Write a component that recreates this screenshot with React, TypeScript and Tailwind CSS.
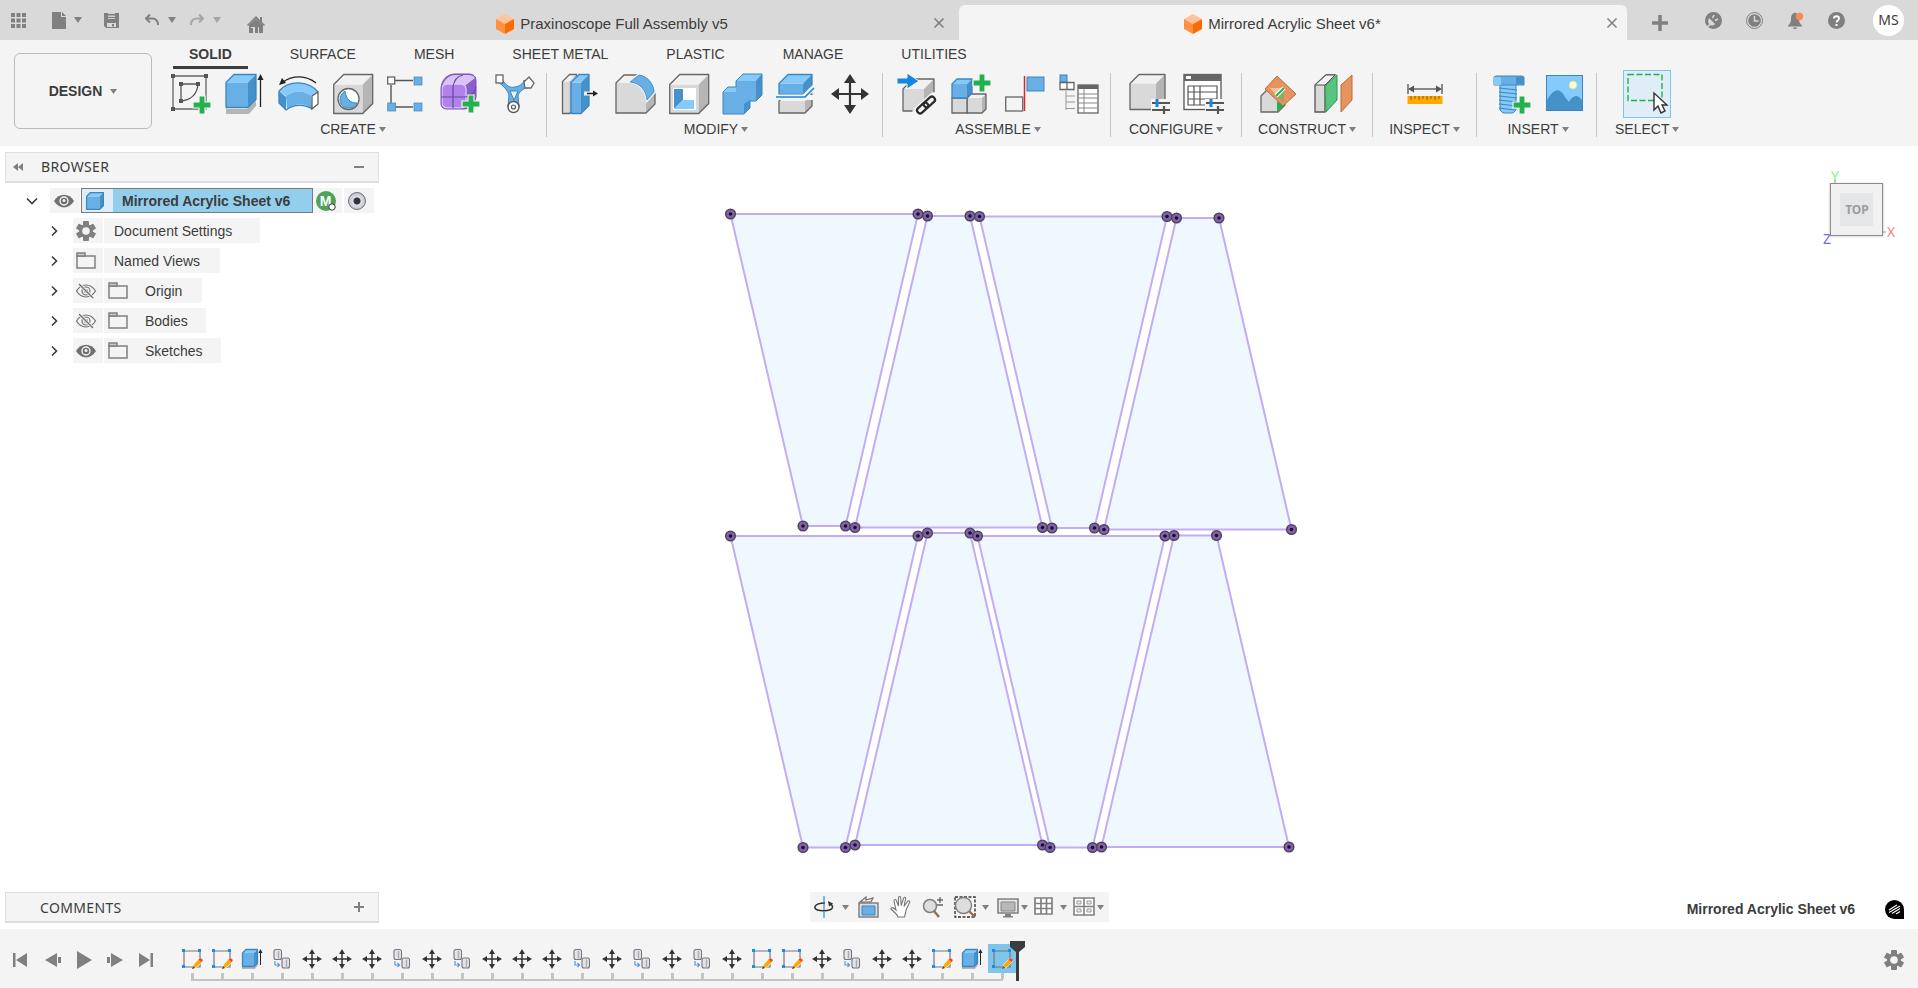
import React from "react";
import { X } from "lucide-react";

const BLUE = { front: "#67afe5", top: "#86c9fb", side: "#4592cb", line: "#3c86bd" };
const GRAY = { front: "#d9d9d9", top: "#f1f1f1", side: "#b5b5b5", line: "#666666" };

type BoxProps = { x: number; y: number; w: number; h: number; d: number; c?: typeof BLUE };

const Box = ({ x, y, w, h, d, c = GRAY }: BoxProps) => (
  <g strokeLinejoin="round">
    <path d={`M${x} ${y + d}h${w - d}v${h - d}h${d - w}z`} fill={c.front} />
    <path d={`M${x} ${y + d}l${d} ${-d}h${w - d}l${-d} ${d}z`} fill={c.top} />
    <path d={`M${x + w - d} ${y + d}l${d} ${-d}v${h - d}l${-d} ${d}z`} fill={c.side} />
    <path
      d={`M${x} ${y + d}l${d} ${-d}h${w - d}v${h - d}l${-d} ${d}h${d - w}z`}
      fill="none"
      stroke={c.line}
      strokeWidth="1.3"
    />
  </g>
);

const Plus = ({ x, y }: { x: number; y: number }) => (
  <path
    d={`M${x - 3} ${y - 9}h6v6h6v6h-6v6h-6v-6h-6v-6h6z`}
    fill="#22b14c"
    stroke="#f4f4f4"
    strokeWidth="1.2"
  />
);

const Tool = ({ children }: { children: React.ReactNode }) => (
  <svg viewBox="0 0 40 40" className="size-10 overflow-visible" aria-hidden="true">
    {children}
  </svg>
);

const SketchTool = () => (
  <Tool>
    <path d="M2 2h33v33H2z" fill="none" stroke="#666" strokeWidth="1.3" />
    <path d="M27 10H10v17C20 26 26 21 27 10z" fill="none" stroke="#555" strokeWidth="1.3" />
    {[[2, 2], [35, 2], [2, 35], [10, 10], [27, 10], [10, 27]].map(([x, y]) => (
      <rect key={`${x}-${y}`} x={x - 2} y={y - 2} width="4" height="4" fill="#555" />
    ))}
    <Plus x={31} y={31} />
  </Tool>
);

const ExtrudeTool = () => (
  <Tool>
    <path d="M1 35h21l9-8v5l-7 8H1z" fill="#b5b5b5" />
    <Box x={1} y={0.5} w={30} h={33} d={8} c={BLUE} />
    <path d="M35.5 4v29" stroke="#222" strokeWidth="1.3" />
    <path d="M35.5 0l3 6h-6z" fill="#222" />
  </Tool>
);

const RevolveTool = () => (
  <Tool>
    <path d="M0 17l7 5c8-6 18-6 25 0l7-4C29 6 10 6 0 17z" fill={BLUE.top} />
    <path d="M0 17l7 6v13l-7-7z" fill={BLUE.side} />
    <path d="M7 22c8-6 18-6 25 0l1 13c-7-6-18-6-25 1z" fill={BLUE.front} />
    <path d="M0 17C10 6 29 6 39 18M0 17v12l7 7c8-6 19-6 26-1" fill="none" stroke={BLUE.line} strokeWidth="1.3" />
    <path d="M33 22l6-4v12l-6 5z" fill="#fff" stroke="#555" strokeWidth="1.2" />
    <path d="M4 8C14 1 27 1 37 9" fill="none" stroke="#222" strokeWidth="1.4" />
    <path d="M0 11l3-7 4 5z" fill="#222" />
  </Tool>
);

const HoleTool = () => (
  <Tool>
    <Box x={0.7} y={0.5} w={39} h={39} d={10} />
    <circle cx="15.5" cy="25" r="10.5" fill="#fff" stroke="#666" strokeWidth="1.3" />
    <path d="M12 17c1 8 5 12 12 12-2 4-5 5-9 5-5 0-8-4-8-8 0-4 2-7 5-9z" fill={BLUE.front} stroke={BLUE.line} />
  </Tool>
);

const PatternTool = () => (
  <Tool>
    <path d="M8 6.5h18M4 11v18M8 33h18" fill="none" stroke="#555" strokeWidth="1.4" />
    <rect x="0.7" y="3" width="7" height="7" fill="#fff" stroke="#666" strokeWidth="1.3" />
    {[[27, 3], [0.7, 29], [27, 29]].map(([x, y]) => (
      <rect key={`${x}-${y}`} x={x} y={y} width="8" height="8" fill={BLUE.front} stroke={BLUE.line} strokeWidth="0.7" />
    ))}
  </Tool>
);

const FormTool = () => (
  <Tool>
    <path d="M0 14C1 6 5 1 13 0h15c5 0 7 3 7 7v16c-1 6-5 11-11 12H6c-4 0-6-2-6-6z" fill="#8a5fcb" />
    <path d="M1 12c3-7 7-11 13-11h13c4 0 6 1 7 3l-9 7H7z" fill="#d9c2f8" />
    <rect x="1" y="10" width="24" height="24" rx="5" fill="#b083ea" stroke="#dfc9fb" strokeWidth="1.3" />
    <path d="M12 34V13C13 6 17 2 22 1M0 23h24c6-1 10-5 11-10" fill="none" stroke="#6b45a3" strokeWidth="1.2" />
    <path d="M0 14C1 6 5 1 13 0h15c5 0 7 3 7 7v16c-1 6-5 11-11 12H6c-4 0-6-2-6-6z" fill="none" stroke="#7950b3" />
    <Plus x={30} y={30} />
  </Tool>
);

const DeriveTool = () => (
  <Tool>
    <path
      d="M6 4c6 9 9 10 14 9s8-3 9-7l6 5c-6 4-11 6-12 11l1 10c-2 6-9 6-11 0l1-11C13 17 8 11 3 8z"
      fill={BLUE.front}
      stroke={BLUE.line}
    />
    <path d="M15 17h8l-4 9z" fill="#f4f4f4" stroke={BLUE.line} />
    <rect x="1" y="1" width="7" height="8" fill="#fff" stroke="#666" strokeWidth="1.3" />
    <path d="M29 8l5-5 5 6-3 5h-6z" fill="#fff" stroke="#666" strokeWidth="1.3" />
    <circle cx="18.5" cy="33" r="5.5" fill="#fff" stroke="#555" strokeWidth="1.4" />
    <circle cx="18.5" cy="33" r="2" fill="#fff" stroke="#555" strokeWidth="1.2" />
  </Tool>
);

const PressPullTool = () => (
  <Tool>
    <Box x={1.5} y={0.5} w={14} h={39} d={7} />
    <path d="M10 7l8-7h11v30l-9 10H10z" fill="#f4f4f4" />
    <Box x={10} y={0.5} w={18} h={39} d={8} c={BLUE} />
    <path d="M23 19.5h15" stroke="#f4f4f4" strokeWidth="4" />
    <path d="M26 19.5h8" stroke="#222" strokeWidth="1.5" />
    <path d="M37 19.5l-5-3v6z" fill="#222" />
  </Tool>
);

const FilletTool = () => (
  <Tool>
    <path d="M1 9l8-8h15C34 4 40 12 40 20v10l-9 9H1z" fill="#f1f1f1" />
    <path d="M1 9h13c9 0 17 8 17 18v12H1z" fill={GRAY.front} />
    <path d="M31 27l9-8v11l-9 9z" fill={GRAY.side} />
    <path d="M1 9l8-8h15C34 4 40 12 40 20v10l-9 9H1z" fill="none" stroke="#666" strokeWidth="1.3" />
    <path d="M14 8l10-8c9 1 16 9 16 18l-8 9C31 17 25 9 14 8z" fill={BLUE.front} stroke="#f4f4f4" strokeWidth="2" />
    <path d="M15 8l9-7c8 1 15 9 15 17l-7 8C31 16 25 9 15 8z" fill={BLUE.front} stroke={BLUE.line} strokeWidth="0.8" />
  </Tool>
);

const ShellTool = () => (
  <Tool>
    <Box x={0.7} y={0.5} w={39} h={39} d={10} />
    <path d="M4 14h23v22H4z" fill="#fff" />
    <path d="M5 15h9v11l-9 9z" fill={BLUE.side} />
    <path d="M14 26h11v9H5z" fill={BLUE.top} />
  </Tool>
);

const CombineTool = () => (
  <Tool>
    <path d="M0 18l5-5h8V7l7-7h19v21l-6 6h-6v7l-6 6H0z" fill={BLUE.front} />
    <path d="M0 18l5-5h8v5zM13 7l7-7h19l-6 7z" fill={BLUE.top} />
    <path d="M33 7l6-7v21l-6 6zM21 30l6-4v8l-6 6z" fill={BLUE.side} />
    <path d="M0 18l5-5h8V7l7-7h19v21l-6 6h-6v7l-6 6H0z" fill="none" stroke={BLUE.line} />
  </Tool>
);

const SplitTool = () => (
  <Tool>
    <Box x={2} y={20} w={33} h={19} d={7} />
    <path d="M0 21h38v5H0z" fill="#f4f4f4" />
    <Box x={2} y={0.5} w={33} h={20} d={9} c={BLUE} />
    <path d="M0 23h27l10-10" fill="none" stroke="#f4f4f4" strokeWidth="5" />
    <path d="M-1 23h29l9-9" fill="none" stroke="#1687e0" strokeWidth="1.6" />
  </Tool>
);

const MoveTool = () => (
  <Tool>
    <path d="M19 4v32M4 20h31" stroke="#333" strokeWidth="2.2" />
    <path d="M19 0l6 9H13zM19 40l6-9H13zM0 20l8-6v12zM38 20l-8-6v12z" fill="#333" />
  </Tool>
);

const InsertDeriveTool = () => (
  <Tool>
    <Box x={6} y={5} w={31} h={32} d={10} />
    <path d="M0 4h10v-5l12 8-12 8v-5H0z" fill="#1687e0" stroke="#f4f4f4" />
    <g fill="none" transform="rotate(-42 29 31)">
      <path d="M18 31h22" stroke="#f4f4f4" strokeWidth="11" strokeLinecap="round" />
      <rect x="18" y="28" width="13" height="6" rx="3" stroke="#2a2a2a" strokeWidth="2.2" />
      <rect x="27" y="28" width="13" height="6" rx="3" stroke="#2a2a2a" strokeWidth="2.2" />
    </g>
  </Tool>
);

const NewComponentTool = () => (
  <Tool>
    <Box x={16} y={20} w={19} h={19} d={4} />
    <path d="M1 24h15v15H1z" fill={GRAY.front} stroke="#666" strokeWidth="1.3" />
    <Box x={1} y={5} w={20} h={19} d={5} c={BLUE} />
    <Plus x={31} y={9} />
  </Tool>
);

const JointTool = () => (
  <Tool>
    <rect x="0.7" y="23" width="17" height="14" fill="#f4f4f4" stroke="#666" strokeWidth="1.3" />
    <rect x="22" y="3" width="17" height="14" fill={BLUE.front} stroke={BLUE.line} />
    <path d="M19.5 2v35" stroke="#d02a2a" strokeWidth="1.5" />
  </Tool>
);

const BomTool = () => (
  <Tool>
    <rect x="1" y="1" width="7" height="7" fill={BLUE.front} stroke={BLUE.line} />
    <path d="M1 8.5h14v7H1zM8 8.5v7" fill="#fff" stroke="#666" strokeWidth="1.3" />
    <path d="M7 17v19M7 22h9M7 28h9M7 34.5h9" fill="none" stroke="#999" />
    <rect x="19" y="11" width="20" height="28" fill="#fff" stroke="#666" strokeWidth="1.3" />
    <path d="M19 11h20v4H19z" fill="#666" />
    <path d="M19 20h20M19 24h20M19 29h20M19 34h20M25 15v24" stroke="#888" />
  </Tool>
);

const Sliders = ({ x, y }: { x: number; y: number }) => (
  <g>
    <path d={`M${x - 1} ${y - 4}h19v14h-19z`} fill="#f4f4f4" />
    <path d={`M${x} ${y}h18M${x} ${y + 7}h18M${x + 12} ${y + 3}v8`} stroke="#555" strokeWidth="2.2" />
    <path d={`M${x + 5} ${y - 4}v8`} stroke="#1687e0" strokeWidth="3" />
  </g>
);

const ConfigureTool = () => (
  <Tool>
    <Box x={1} y={0.5} w={35} h={35} d={9} />
    <Sliders x={23} y={29} />
  </Tool>
);

const ConfigTableTool = () => (
  <Tool>
    <rect x="1" y="0.5" width="37" height="35" fill="#fff" stroke="#555" strokeWidth="1.3" />
    <path d="M1 0h37v7H1z" fill="#666" />
    <path d="M3 2h5v3H3z" fill="#fff" />
    <path d="M5 12h29v19H5zM5 18h29M5 25h29M11 12v19M17 12v19" fill="none" stroke="#555" strokeWidth="1.2" />
    <Sliders x={23} y={29} />
  </Tool>
);

const PlaneAngleTool = () => (
  <Tool>
    <path d="M1 22l7-7h10l7 6v10l-7 7H1z" fill={GRAY.front} stroke="#666" strokeWidth="1.3" />
    <path d="M17 27l7 5-7 6z" fill="#22b14c" />
    <path d="M17 2l19 18-13 12L5 15z" fill="#e5935f" stroke="#b86c3c" />
    <path d="M10 14h14l-6 9z" fill="#f0c4a6" />
    <path d="M24 15v14l-8-7z" fill="#97a565" />
    <path d="M16 22l8-8" stroke="#fff" strokeWidth="4" />
    <path d="M16 22l8-8" stroke="#22b14c" strokeWidth="2" />
  </Tool>
);

const PlaneOffsetTool = () => (
  <Tool>
    <path d="M1 11L12 1h9L11 11v27H1z" fill={GRAY.front} stroke="#555" strokeWidth="1.3" />
    <path d="M1 11L12 1h9L11 11z" fill="#f1f1f1" stroke="#555" />
    <path d="M11 12L23 1v25L12 38z" fill="#59c47d" stroke="#2c9a52" />
    <path d="M27 11L38 1v25L27 38z" fill="#e5935f" stroke="#b86c3c" />
  </Tool>
);

const MeasureTool = () => (
  <Tool>
    <path d="M3 10v10M37 10v10M6 15h28" stroke="#666" strokeWidth="1.5" />
    <path d="M3 15l6-3.5v7zM37 15l-6-3.5v7z" fill="#555" />
    <rect x="2.5" y="22" width="35" height="8" fill="#ffa800" />
    <path d="M6 22v4M10 22v3M14 22v4M18 22v3M22 22v4M26 22v3M30 22v4M34 22v3" stroke="#8a5a00" />
  </Tool>
);

const FastenerTool = () => (
  <Tool>
    <path d="M9 10h16v26l-3 3H12l-3-3z" fill={BLUE.top} stroke={BLUE.line} />
    <path d="M8 14l18 2M8 18l18 2M8 22l18 2M8 26l18 2M8 30l18 2M8 34l16 2" stroke={BLUE.line} strokeWidth="1.2" />
    <path d="M3 3l2-1h26l2 1v8H3z" fill={BLUE.front} stroke={BLUE.line} />
    <path d="M3 3h7v8H3z" fill={BLUE.top} />
    <path d="M25 3h8v7h-8z" fill={BLUE.side} />
    <Plus x={31} y={31} />
  </Tool>
);

const CanvasTool = () => (
  <Tool>
    <rect x="1.5" y="1.5" width="36" height="35" fill={BLUE.top} />
    <path d="M2 26c7-12 13-13 18-3l4 5c4-7 8-8 13-2v10H2z" fill={BLUE.side} />
    <circle cx="28" cy="11" r="4" fill="#fffbc8" stroke="#c9d7a8" strokeWidth="0.7" />
    <rect x="1.5" y="1.5" width="36" height="35" fill="none" stroke={BLUE.line} />
  </Tool>
);

const SelectTool = () => (
  <Tool>
    <rect x="1" y="0.5" width="34" height="26" fill="none" stroke="#22b14c" strokeWidth="1.4" strokeDasharray="6 2.5" />
    <path d="M27 19v17l4-4 3 7 4-2-3-6h5z" fill="#fff" stroke="#333" strokeWidth="1.4" />
  </Tool>
);

const groups = [
  {
    label: "CREATE",
    box: "pl-2.5 pr-[7px]",
    tools: [SketchTool, ExtrudeTool, RevolveTool, HoleTool, PatternTool, FormTool, DeriveTool],
  },
  {
    label: "MODIFY",
    box: "pl-2.5 pr-[7px]",
    tools: [PressPullTool, FilletTool, ShellTool, CombineTool, SplitTool, MoveTool],
  },
  { label: "ASSEMBLE", box: "pl-2.5 pr-[7px]", tools: [InsertDeriveTool, NewComponentTool, JointTool, BomTool] },
  { label: "CONFIGURE", box: "px-3.5", tools: [ConfigureTool, ConfigTableTool] },
  { label: "CONSTRUCT", box: "px-3.5", tools: [PlaneAngleTool, PlaneOffsetTool] },
  { label: "INSPECT", box: "w-[103px]", tools: [MeasureTool] },
  { label: "INSERT", box: "pl-2.5 pr-[7px]", tools: [FastenerTool, CanvasTool] },
  { label: "SELECT", box: "pl-[18px]", tools: [SelectTool] },
];

const workspaceTabs = ["SOLID", "SURFACE", "MESH", "SHEET METAL", "PLASTIC", "MANAGE", "UTILITIES"];

const Caret = ({ className = "h-[5px] w-[7px] text-[#808080]" }: { className?: string }) => (
  <svg viewBox="0 0 8 6" preserveAspectRatio="none" className={`shrink-0 ${className}`} aria-hidden="true">
    <path d="M0 0h8L4 6z" fill="currentColor" />
  </svg>
);

const OrangeCube = () => (
  <svg viewBox="0 0 18 20" className="h-5 w-[18px] shrink-0" aria-hidden="true">
    <path d="M9 0l9 5-9 5-9-5z" fill="#ffc39b" />
    <path d="M0 5l9 5v10l-9-5z" fill="#ff9142" />
    <path d="M18 5l-9 5v10l9-5z" fill="#ff6a00" />
  </svg>
);

const TitleBar = () => (
  <header className="flex h-10 bg-[#d9d9d9]">
    <div className="flex w-[291px] shrink-0 items-center pl-[11px] text-[#808080]">
      <button aria-label="Data panel" className="mr-[26px]">
        <svg viewBox="0 0 15 15" className="size-[15px]" fill="currentColor">
          {[0, 5.5, 11].map((y) =>
            [0, 5.5, 11].map((x) => <rect key={`${x}-${y}`} x={x} y={y} width="4" height="4" />)
          )}
        </svg>
      </button>
      <button aria-label="File" className="mr-[22px] flex items-center gap-2">
        <svg viewBox="0 0 14 17" className="h-[17px] w-3.5" fill="currentColor">
          <path d="M0 0h9v5h5v12H0z" />
          <path d="M10 0l4 4h-4z" />
        </svg>
        <Caret className="h-1.5 w-2" />
      </button>
      <button aria-label="Save" className="mr-[26px]">
        <svg viewBox="0 0 15 15" className="size-[15px]">
          <path d="M0 0h15v15H2l-2-2z" fill="currentColor" />
          <path d="M4 0h7v6H4z" fill="#cfcfcf" />
          <path d="M4 1h7v1.5H4zM4 4h7v1H4z" fill="currentColor" />
          <path d="M3 10h9v4H3z" fill="#d9d9d9" />
          <path d="M8 11h2v2.500H8z" fill="currentColor" />
        </svg>
      </button>
      <button aria-label="Undo" className="mr-3.5 flex items-center gap-[9px]">
        <svg viewBox="0 0 14 12" className="h-3 w-3.5" fill="none" stroke="currentColor" strokeWidth="2">
          <path d="M5 0.5L1 4.5l4 4M1 4.5h6c4 0 6 2 6 6.5" />
        </svg>
        <Caret className="h-1.5 w-2" />
      </button>
      <button aria-label="Redo" className="mr-[26px] flex items-center gap-[9px] text-[#a6a6a6]">
        <svg viewBox="0 0 14 12" className="h-3 w-3.5" fill="none" stroke="currentColor" strokeWidth="2">
          <path d="M9 0.5l4 4-4 4M13 4.5H7c-4 0-6 2-6 6.5" />
        </svg>
        <Caret className="h-1.5 w-2" />
      </button>
      <button aria-label="Home" className="pt-2">
        <svg viewBox="0 0 18 17" className="h-[17px] w-[18px]">
          <path d="M9 0l4 4V1h2v5l3 3-1 1-8-7-8 7-1-1z" fill="currentColor" />
          <path d="M9 3l7 6v8H2V9z" fill="currentColor" />
          <path d="M4 11h3v6H6v-5H4zM7 11h1v6H7zM11 11h1v6h-1z" fill="#d9d9d9" />
        </svg>
      </button>
    </div>

    <div className="grid flex-1 grid-cols-2">
      <div className="flex items-center pr-3.5 text-[#808080]">
        <a href="#praxinoscope" className="flex flex-1 items-center justify-center gap-1.5 pt-2 text-[15px] text-[#3c3c3c]">
          <OrangeCube />
          Praxinoscope Full Assembly v5
        </a>
        <button aria-label="Close Praxinoscope Full Assembly v5" className="pt-1.5">
          <X size={16} strokeWidth={2.5} className="-mx-0.5" />
        </button>
      </div>
      <div className="mt-[5px] flex items-center rounded-t-md bg-[#f4f4f4] pr-[9px] text-[#808080]">
        <a href="#mirrored" className="flex flex-1 items-center justify-center gap-1.5 pt-[3px] text-[15px] text-[#3c3c3c]">
          <OrangeCube />
          Mirrored Acrylic Sheet v6*
        </a>
        <button aria-label="Close Mirrored Acrylic Sheet v6">
          <X size={16} strokeWidth={2.5} className="-mx-0.5" />
        </button>
      </div>
    </div>

    <div className="flex w-[291px] shrink-0 items-center justify-between pr-3.5 pl-[25px] text-[#808080]">
      <button aria-label="New tab" className="pt-1.5">
        <svg viewBox="0 0 16 16" className="size-4" fill="none" stroke="currentColor" strokeWidth="3.5">
          <path d="M8 0v16M0 8h16" />
        </svg>
      </button>
      <div className="flex items-center gap-6">
        <button aria-label="Extensions">
          <svg viewBox="0 0 17 17" className="size-[17px]">
            <circle cx="8.5" cy="8.5" r="8.5" fill="currentColor" />
            <path d="M2 15l5-4M9 3L7.5 6M13 7l-3 1.5" stroke="#d9d9d9" strokeWidth="1.6" />
            <path d="M4 6l6 6c-2 2-4 2-5.5 0.5S2.500 8 4 6z" fill="#d9d9d9" />
          </svg>
        </button>
        <button aria-label="Job status">
          <svg viewBox="0 0 17 17" className="size-[17px]">
            <circle cx="8.5" cy="8.5" r="8" fill="none" stroke="currentColor" />
            <circle cx="8.5" cy="8.5" r="6.300" fill="currentColor" />
            <path d="M8.5 4v5h4" fill="none" stroke="#d9d9d9" strokeWidth="1.5" />
          </svg>
        </button>
        <button aria-label="Notifications">
          <svg viewBox="0 0 17 17" className="size-[17px]">
            <path d="M8 0.5c3 1 4 3 4 6 0 4 1 5 3 7v1H1v-1c2-2 3-3 3-7 0-3 1-5 4-6zM6 15.5h4c0 2-4 2-4 0z" fill="currentColor" />
            <circle cx="12.5" cy="4.5" r="3.7" fill="#ff8a50" />
          </svg>
        </button>
        <button aria-label="Help">
          <svg viewBox="0 0 17 17" className="size-[17px]">
            <circle cx="8.5" cy="8.5" r="8.5" fill="currentColor" />
            <path d="M6 6.5C6 3.500 11 3.500 11 6.500c0 2-2.500 2-2.500 4" fill="none" stroke="#fff" strokeWidth="1.8" />
            <path d="M7.5 12h2v2h-2z" fill="#fff" />
          </svg>
        </button>
        <button
          aria-label="Account"
          className="ml-1 size-[31px] rounded-full bg-white font-['Noto_Sans',sans-serif] text-sm text-[#3c3c3c]"
        >
          MS
        </button>
      </div>
    </div>
  </header>
);

const Ribbon = () => (
  <div className="flex bg-[#f4f4f4] pb-[9px]">
    <button className="mt-[13px] ml-3.5 flex h-[76px] w-[138px] shrink-0 items-center justify-center gap-2 rounded-md border border-[#bbbbbb] text-sm font-bold">
      DESIGN
      <Caret />
    </button>

    <div className="ml-[5px]">
      <div role="tablist" className="flex h-[30px] gap-[26px] pl-4">
        {workspaceTabs.map((tab, i) => (
          <button
            key={tab}
            role="tab"
            aria-selected={i === 0}
            className={`mb-px h-[29px] border-b-3 px-4 pt-0.5 whitespace-nowrap ${
              i === 0 ? "border-[#3c3c3c] font-bold" : "border-transparent"
            }`}
          >
            {tab}
          </button>
        ))}
      </div>

      <div className="flex items-end">
        {groups.map((group, i) => (
          <React.Fragment key={group.label}>
            {i > 0 && <div className="h-16 w-px shrink-0 bg-[#c6c6c6]" />}
            <div className={`flex shrink-0 flex-col items-center gap-[3px] ${group.box}`}>
              <div className="flex gap-1.5">
                {group.tools.map((Icon, n) => (
                  <button
                    key={n}
                    aria-label={`${group.label} ${n + 1}`}
                    className={`size-12 border p-[3px] ${
                      group.label === "SELECT" ? "border-[#7cc4e8] bg-[#deedf6]" : "border-transparent"
                    }`}
                  >
                    <Icon />
                  </button>
                ))}
              </div>
              <button className="flex h-4 items-center gap-[3px] leading-4">
                {group.label}
                <Caret />
              </button>
            </div>
          </React.Fragment>
        ))}
      </div>
    </div>
  </div>
);

const Eye = ({ hidden = false }: { hidden?: boolean }) => (
  <svg viewBox="0 0 20 16" className="h-4 w-5" aria-hidden="true">
    {hidden ? (
      <g fill="none" stroke="#707070" strokeWidth="1.2">
        <path d="M0.5 8c5-8 14-8 19 0-5 8-14 8-19 0z" />
        <circle cx="10" cy="8" r="4" />
        <circle cx="10" cy="8" r="1.5" />
        <path d="M3 1l14 14" stroke="#f4f4f4" strokeWidth="3" />
        <path d="M3 1l14 14" strokeWidth="1.4" />
      </g>
    ) : (
      <>
        <path d="M0 8c5-8.500 15-8.500 20 0-5 8.500-15 8.500-20 0z" fill="#707070" />
        <circle cx="10" cy="8" r="4" fill="none" stroke="#f4f4f4" strokeWidth="1.4" />
        <circle cx="10" cy="7.5" r="1.5" fill="#f4f4f4" />
      </>
    )}
  </svg>
);

const Folder = () => (
  <svg viewBox="0 0 20 17" className="h-[17px] w-5" fill="none" stroke="#808080" strokeWidth="1.5" aria-hidden="true">
    <path d="M1 4h18v12H1z" />
    <path d="M1 1h8v3H1z" fill="#c9c9c9" />
  </svg>
);

const Gear = () => (
  <svg viewBox="0 0 20 20" className="size-5" aria-hidden="true">
    <g fill="#808080">
      <circle cx="10" cy="10" r="7" />
      {[0, 60, 120].map((a) => (
        <rect key={a} x="7" y="0" width="6" height="20" rx="1" transform={`rotate(${a} 10 10)`} />
      ))}
    </g>
    <circle cx="10" cy="10" r="3.8" fill="#f4f4f4" />
  </svg>
);

const Chevron = ({ open = false }: { open?: boolean }) => (
  <svg viewBox="0 0 12 12" className="size-3" fill="none" stroke="#3c3c3c" strokeWidth="1.6" aria-hidden="true">
    {open ? <path d="M1 3.500l5 5 5-5" /> : <path d="M4 1.500L8.500 6 4 10.500" />}
  </svg>
);

const nodes = [
  { label: "Document Settings", icon: "gear", pad: "pl-2.5 pr-7" },
  { label: "Named Views", icon: "folder", pad: "pl-2.5 pr-5" },
  { label: "Origin", icon: "folder", eye: "off", pad: "pl-1 pr-5" },
  { label: "Bodies", icon: "folder", eye: "off", pad: "pl-1 pr-[18px]" },
  { label: "Sketches", icon: "folder", eye: "on", pad: "pl-1 pr-[18px]" },
];

const Browser = () => (
  <section className="relative ml-[5px] w-[374px]">
    <div className="flex h-[31px] items-center border border-b-2 border-[#dedede] bg-[#f4f4f4] pr-3.5 pl-[7px] font-['Noto_Sans',sans-serif]">
      <button aria-label="Collapse browser">
        <svg viewBox="0 0 10 8" className="h-2 w-2.5" fill="#808080">
          <path d="M5 0v8L0 4zM10 0v8L5 4z" />
        </svg>
      </button>
      <h2 className="flex-1 pl-[18px] tracking-wide">BROWSER</h2>
      <button aria-label="Minimize" className="h-0.5 w-2.5 bg-[#808080]" />
    </div>

    <div className="mt-[5px] flex h-[25px] items-center">
      <button aria-label="Collapse document" className="flex w-[45px] justify-end pr-3">
        <Chevron open />
      </button>
      <button aria-label="Toggle document visibility" className="mr-px flex h-full w-[30px] items-center bg-[#f4f4f4] pl-1">
        <Eye />
      </button>
      <button className="flex h-full w-[232px] items-center border border-[#7a7a7a] bg-[#93cfec] font-bold whitespace-nowrap">
        <span className="mr-[9px] flex h-full w-[31px] items-center bg-[#deedf6] pl-1">
          <svg viewBox="0 0 18 18" className="size-[18px]">
            <Box x={0.5} y={0.5} w={17} h={17} d={4} c={BLUE} />
          </svg>
        </span>
        Mirrored Acrylic Sheet v6
      </button>
      <span className="flex h-full w-[29px] items-center bg-[#f4f4f4] pl-[3px]">
        <svg viewBox="0 0 20 20" className="size-5">
          <circle cx="10" cy="10" r="10" fill="#4ea357" />
          <text x="9.5" y="15" textAnchor="middle" fontSize="14" fontWeight="700" fill="#fff">
            M
          </text>
          <circle cx="16" cy="16" r="3.2" fill="#fff" stroke="#333" />
        </svg>
      </span>
      <label className="ml-0.5 flex h-full w-[30px] items-center bg-[#f4f4f4] pl-1">
        <input
          type="radio"
          defaultChecked
          aria-label="Activate component"
          className="size-[18px] appearance-none rounded-full border border-[#707070] bg-[radial-gradient(circle,#333_0_3px,#dde1ea_4px,#b9bfcc_9px)]"
        />
      </label>
    </div>

    <ul>
      {nodes.map((node) => (
        <li key={node.label} className="mt-[5px] flex h-[25px] items-center pl-[35px]">
          <button aria-label={`Expand ${node.label}`} className="flex w-[33px] pl-2">
            <Chevron />
          </button>
          <span className="mr-px flex h-full w-[30px] items-center bg-[#f4f4f4] pl-[3px]">
            {node.eye && (
              <button aria-label={`Toggle ${node.label}`}>
                <Eye hidden={node.eye === "off"} />
              </button>
            )}
            {!node.eye && (node.icon === "gear" ? <Gear /> : <Folder />)}
          </span>
          <span className={`flex h-full items-center bg-[#f4f4f4] ${node.pad}`}>
            {node.eye && (
              <span className="mr-[17px]">
                <Folder />
              </span>
            )}
            {node.label}
          </span>
        </li>
      ))}
    </ul>
  </section>
);

// corner order: top left, top right, bottom right, bottom left
const profiles = [
  [[730.5, 68], [918, 68], [845.5, 380], [803, 380]],
  [[927.5, 70], [970, 70], [1042.5, 381.5], [855, 381.5]],
  [[979.5, 70.5], [1167, 70.5], [1094.5, 382], [1052, 382]],
  [[1176.5, 72], [1219, 72], [1291.5, 383.5], [1104, 383.5]],
  [[730.5, 390], [918, 390], [845.5, 701.5], [803, 701.5]],
  [[927.5, 387], [970, 387], [1042.5, 699], [855, 699]],
  [[977.5, 390], [1165, 390], [1092.5, 701.5], [1050, 701.5]],
  [[1174, 389.5], [1216.5, 389.5], [1289, 701], [1101.5, 701]],
];

const SketchView = () => (
  <svg
    viewBox="0 0 1918 783"
    className="absolute inset-0 size-full"
    role="img"
    aria-label="Acrylic sheet sketch"
  >
    {profiles.map((p, i) => (
      <polygon key={i} points={p.join(" ")} fill="#f0f8ff" stroke="#c3abf5" strokeWidth="2" />
    ))}
    {profiles.flat().map(([x, y], i) => (
      <g key={i}>
        <circle cx={x} cy={y} r="4.8" fill="#8460b5" stroke="#4c4654" strokeWidth="1.5" />
        <circle cx={x} cy={y} r="1.8" fill="#16101f" />
      </g>
    ))}
  </svg>
);

const ViewCube = () => (
  <svg viewBox="0 0 84 84" className="relative mt-3.5 mr-4 size-[84px]" role="img" aria-label="View cube">
    <rect x="10" y="16" width="57" height="56" rx="3" fill="#000" opacity="0.04" />
    <rect x="11" y="17" width="55" height="54" rx="2" fill="#000" opacity="0.06" />
    <rect x="12.500" y="17.500" width="52" height="52" fill="#f1f1f1" stroke="#8c8c8c" />
    <rect x="22" y="27" width="33" height="33" fill="#e4e6e8" />
    <g fontFamily="Noto Sans, sans-serif" textAnchor="middle">
      <text x="39" y="48" fontSize="12" fontWeight="700" fill="#9a9da1">TOP</text>
      <text x="17" y="15" fontSize="14" fill="#7df57d">Y</text>
      <text x="73" y="71" fontSize="14" fill="#f77f7f">X</text>
      <text x="9" y="78" fontSize="14" fill="#6a6af5">Z</text>
    </g>
    <path d="M17 14v3M65 66h3M12 70l-1-2" stroke="#999" />
  </svg>
);

const navTools = [
  {
    label: "Orbit",
    box: "w-[46px] gap-[7px] pl-[3px]",
    menu: true,
    icon: (
      <>
        <path d="M11 0v6M11 8v6M11 16v6" stroke="#4ba3e6" strokeWidth="1.5" />
        <path d="M16 7.500c5 2 5 6-2 7-8 1-13-1-12-4 1-2 5-3.500 10-3.500" fill="none" stroke="#333" strokeWidth="1.5" />
        <path d="M15 5l5 2.500-4 3z" fill="#333" />
      </>
    ),
  },
  {
    label: "Look at",
    box: "w-8 pl-0.5",
    icon: (
      <>
        <path d="M1 7h19v14H1z" fill="#ddd" stroke="#808080" strokeWidth="1.5" />
        <path d="M4 10h13v9H4z" fill={BLUE.front} stroke={BLUE.line} />
        <path d="M2 6l6-5v3l7-2-2 4z" fill="#eee" stroke="#707070" strokeWidth="1.2" />
      </>
    ),
  },
  {
    label: "Pan",
    box: "w-8 pl-0.5",
    icon: (
      <path
        d="M8 21c-1-3-5-6-7-8 0-2 2-2 5 1L4 5c0-2 2-2 2.500 0L8.500 10 8.500 2c0-2 2-2 2.200 0l0.500 7.500L13.500 2.500c0.500-2 2.500-1.500 2 0.500l-1.500 7.500 3.500-5c1-1.500 2.800-0.500 2 1L16 14c0 3-1 4-1.500 7h-6z"
        fill="#fff"
        stroke="#777"
        strokeWidth="1.1"
      />
    ),
  },
  {
    label: "Zoom",
    box: "w-[33px] pl-0.5",
    icon: (
      <>
        <circle cx="8" cy="10" r="6.5" fill="#ddd" stroke="#808080" strokeWidth="1.5" />
        <path d="M12 15l5 6" stroke="#9a6b45" strokeWidth="2.4" />
        <path d="M15 4h6M18 1v6M15 9h6" stroke="#666" strokeWidth="1.3" />
      </>
    ),
  },
  {
    label: "Fit",
    box: "w-[42px] gap-1.5 pl-px",
    menu: true,
    icon: (
      <>
        <path d="M1 1h20v20H1z" fill="none" stroke="#333" strokeWidth="1.4" strokeDasharray="3 1.5" />
        <circle cx="9.5" cy="9.5" r="8" fill="#ddd" stroke="#808080" strokeWidth="1.4" />
        <path d="M15 15l6 6" stroke="#9a6b45" strokeWidth="2.4" />
      </>
    ),
  },
  {
    label: "Display settings",
    box: "w-9 gap-0.5 pl-0.5",
    menu: true,
    icon: (
      <>
        <path d="M1 3h20v14H1z" fill="#e6e6e6" stroke="#808080" strokeWidth="1.6" />
        <path d="M4 6h14v9H4z" fill="#b8b8b8" stroke="#888" />
        <path d="M8 18h6v2h2v1.500H6V20h2z" fill="#808080" />
      </>
    ),
  },
  {
    label: "Grid and snaps",
    box: "w-[41px] gap-[5px] pl-0.5",
    menu: true,
    icon: (
      <path d="M2 2h17v16H2zM8 2v16M13.500 2v16M2 7.500h17M2 12.500h17" fill="#fff" stroke="#808080" strokeWidth="1.7" />
    ),
  },
  {
    label: "Viewports",
    box: "w-[37px] gap-0.5 pl-px",
    menu: true,
    icon: (
      <>
        <path d="M1 2h20v17H1zM11 2v17M1 10.500h20" fill="#fff" stroke="#808080" strokeWidth="1.6" />
        <path d="M4 5h4v3H4zM14 5h4v3h-4zM4 13h4v3H4zM14 13h4v3h-4z" fill="#eee" stroke="#999" />
      </>
    ),
  },
];

const NavBar = () => (
  <div className="flex h-[30px] items-center bg-[#f4f4f4]">
    {navTools.map((tool) => (
      <button key={tool.label} aria-label={tool.label} className={`flex h-full items-center ${tool.box}`}>
        <svg viewBox="0 0 22 22" className="size-[22px] shrink-0">
          {tool.icon}
        </svg>
        {tool.menu && <Caret />}
      </button>
    ))}
  </div>
);

const Workspace = () => (
  <main className="relative flex flex-1 flex-col justify-between bg-white">
    <SketchView />
    <div className="flex justify-between pt-1.5">
      <Browser />
      <ViewCube />
    </div>

    <div className="relative grid grid-cols-[1fr_auto_1fr] items-start pb-1.5">
      <section className="ml-[5px] flex h-[31px] w-[374px] items-center border border-b-2 border-[#dedede] bg-[#f4f4f4] pr-3.5 pl-[34px] font-['Noto_Sans',sans-serif]">
        <h2 className="flex-1 pt-0.5 tracking-wide">COMMENTS</h2>
        <button aria-label="Expand comments">
          <svg viewBox="0 0 10 10" className="size-2.5" stroke="#808080" strokeWidth="2">
            <path d="M5 0v10M0 5h10" />
          </svg>
        </button>
      </section>
      <NavBar />
      <div className="flex items-center justify-end gap-[30px] pt-[7px] pr-3.5">
        <span className="font-bold">Mirrored Acrylic Sheet v6</span>
        <button aria-label="Assistant">
          <svg viewBox="0 0 19 19" className="size-[19px]">
            <path d="M9.500 0a9.500 9.500 0 019.500 9.500V19H9.500a9.500 9.500 0 010-19z" fill="#000" />
            <path d="M4 10l8-5M4 12.500l11-6.500M7 13.500l8-5M11 14l4-2.500" stroke="#fff" strokeWidth="1.1" />
          </svg>
        </button>
      </div>
    </div>
  </main>
);

const SketchFeature = () => (
  <>
    <path d="M2 2h16v16H2z" fill="none" stroke="#777" strokeWidth="1.2" />
    {[[0, 0], [16, 0], [0, 16]].map(([x, y]) => (
      <rect key={`${x}-${y}`} x={x} y={y} width="3" height="3" fill="#1a8cf0" />
    ))}
    <path d="M10 20l2-5 6-6 3 3-6 6z" fill="#ffa800" stroke="#f4f4f4" strokeWidth="0.6" />
    <path d="M16.500 10.500l2-1.500 2.500 2-1.500 2z" fill="#ff3b3b" />
    <path d="M10 20l1-3 2 2z" fill="#444" />
  </>
);

const ExtrudeFeature = () => (
  <>
    <path d="M0 16h13l3-3v3l-3 4H0z" fill="#b5b5b5" />
    <Box x={0.5} y={0.5} w={15} h={17} d={3.5} c={BLUE} />
    <path d="M18.500 2v14" stroke="#222" />
    <path d="M18.500 0l2 4h-4z" fill="#222" />
  </>
);

const CopyFeature = () => (
  <>
    {[[2, 0.5], [10, 9]].map(([x, y]) => (
      <g key={x}>
        <rect x={x} y={y} width="7.5" height="10" rx="2" fill="#e3e5ea" stroke="#777" strokeWidth="1.1" />
        <path d={`M${x + 4.5} ${y + 1.5}v7.500`} stroke="#a9adb8" strokeWidth="1.5" />
      </g>
    ))}
    <path d="M3 12v4h4M5.500 14l2 2-2 2" fill="none" stroke="#5b95e8" strokeWidth="1.2" />
  </>
);

const MoveFeature = () => (
  <>
    <path d="M10 3v14M3 10h14" stroke="#333" strokeWidth="1.5" />
    <path d="M10 0l3 5H7zM10 20l3-5H7zM0 10l5-3v6zM20 10l-5-3v6z" fill="#333" />
  </>
);

const featureIcons: Record<string, React.FC> = {
  s: SketchFeature,
  e: ExtrudeFeature,
  c: CopyFeature,
  m: MoveFeature,
};

const timeline = "ssecmmmcmcmmmcmcmcmssmcmmses".split("");

const playback = [
  { label: "Go to start", box: "w-8", path: "M0 2h2.500v14H0zM14 2v14L3 9z" },
  { label: "Step back", box: "w-8", path: "M12 2v14L0 9zM13 6h3v6h-3z" },
  { label: "Play", box: "w-[30px]", path: "M0 0l15 9-15 9z" },
  { label: "Step forward", box: "w-8", path: "M4 2v14l12-7zM0 6h3v6H0z" },
  { label: "Go to end", box: "w-[38px]", path: "M0 2v14l11-7zM11.500 2H14v14h-2.500z" },
];

const Timeline = () => (
  <footer className="flex h-[59px] bg-[#f4f4f4]">
    <div className="flex pt-[22px] pl-[13px]">
      {playback.map((b) => (
        <button key={b.label} aria-label={b.label} className={`h-[18px] ${b.box}`}>
          <svg viewBox="0 0 18 18" className="size-[18px]" fill="#808080">
            <path d={b.path} />
          </svg>
        </button>
      ))}
    </div>

    <div className="pt-[15px]">
      <ol className="flex">
        {timeline.map((kind, i) => {
          const Icon = featureIcons[kind];
          const current = i === timeline.length - 1;
          return (
            <li key={i} className="relative flex w-[30px] flex-col items-center">
              <button
                aria-label={`Feature ${i + 1}`}
                className={`flex size-[29px] items-center justify-center ${current ? "bg-[#7dc5ea]" : ""}`}
              >
                <svg viewBox="0 0 20 20" className="size-5 overflow-visible">
                  <Icon />
                </svg>
              </button>
              <span className="h-1.5 w-[3px] bg-[#c4c4c4]" />
              {current && (
                <svg viewBox="0 0 15 40" className="absolute -top-[3px] -right-2 h-10 w-[15px]" fill="#3c3c3c">
                  <path d="M0 0h15v6L9 11v29H6V11L0 6z" />
                </svg>
              )}
            </li>
          );
        })}
      </ol>
      <div className="mx-3.5 h-0.5 bg-[#c4c4c4]" />
    </div>

    <button aria-label="Timeline settings" className="mt-[21px] mr-3.5 ml-auto h-5">
      <Gear />
    </button>
  </footer>
);

const App = () => (
  <div className="flex min-h-screen flex-col font-['Liberation_Sans',Arial,sans-serif] text-sm text-[#3c3c3c]">
    <TitleBar />
    <Ribbon />
    <Workspace />
    <Timeline />
  </div>
);

export default App;
